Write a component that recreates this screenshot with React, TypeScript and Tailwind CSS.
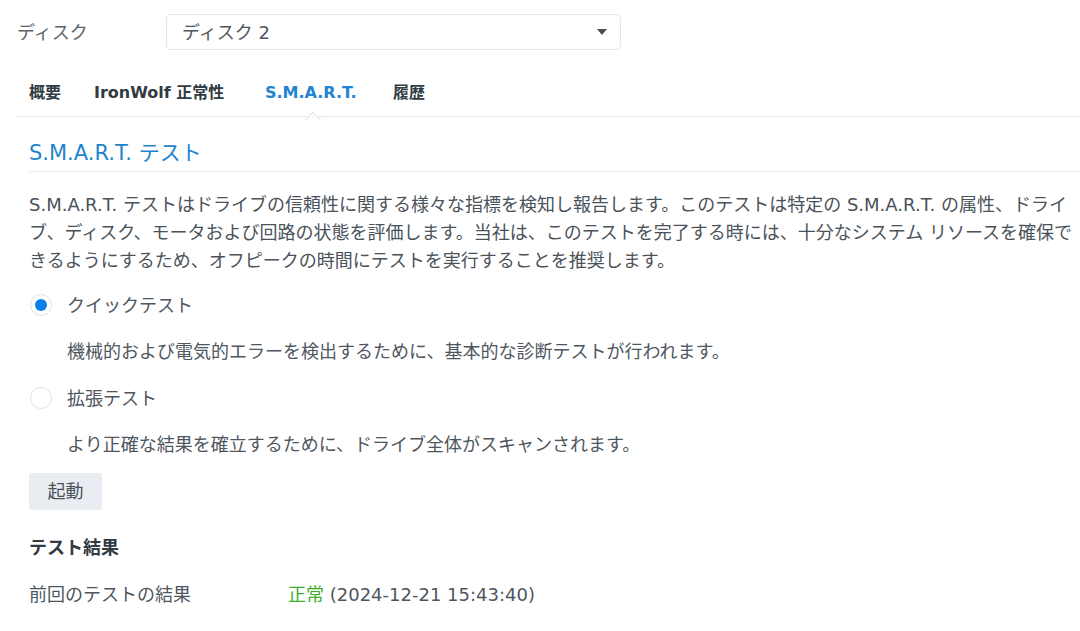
const font = { fontFamily: '"DejaVu Sans", "Noto Sans CJK JP", sans-serif' };

function Radio({ checked }: { checked?: boolean }) {
  return (
    <span className="flex h-[22px] w-[22px] items-center justify-center rounded-full border border-[#dfe3e8] bg-white">
      {checked && <span className="h-[12px] w-[12px] rounded-full bg-[#0a7fe6]" />}
    </span>
  );
}

const tabs = [
  { label: "概要", w: "w-[32px]" },
  { label: "IronWolf 正常性", w: "w-[138px]" },
  { label: "S.M.A.R.T.", w: "w-[95px]", active: true },
  { label: "履歴", w: "w-[33px]" },
];

export default function App() {
  return (
    <div className="h-[631px] w-[1080px] overflow-hidden bg-white text-[#4e5660]" style={font}>
      {/* disk picker */}
      <div className="flex items-center pl-[17px] pt-[14px]">
        <span className="w-[149px] text-[18px] text-[#5b636b]">ディスク</span>
        <div className="flex h-[36px] w-[455px] items-center justify-between rounded-[5px] border border-[#e2e5e9] pl-[15px] pr-[13px] text-[18px]">
          <span>ディスク 2</span>
          <svg width="10" height="6" viewBox="0 0 10 6">
            <path d="M0 0h10L5 6z" fill="#4a4f55" />
          </svg>
        </div>
      </div>

      {/* tab bar */}
      <div className="ml-[17px] mt-[20px] flex h-[47px] items-center gap-[33px] border-b border-[#e8ebee] pl-[12px] text-[16px] font-bold text-[#323a42]">
        {tabs.map((t) => (
          <div
            key={t.label}
            className={"relative whitespace-nowrap " + t.w + (t.active ? " text-[#1f84d1]" : "")}
          >
            {t.label}
            {t.active && (
              <span className="absolute left-1/2 top-[33px] h-[11px] w-[11px] -translate-x-1/2 rotate-45 border-l border-t border-[#e2e5e9] bg-white" />
            )}
          </div>
        ))}
      </div>

      <div className="pl-[29px]">
        <div className="mt-[22px] border-b border-dotted border-[#d9dde2] pb-[4px] text-[21px] leading-[28px] text-[#1d84cc]">
          S.M.A.R.T. テスト
        </div>
        <p className="mt-[19px] whitespace-nowrap text-[18px] leading-[28px] text-[#4a525a]">
          S.M.A.R.T. テストはドライブの信頼性に関する様々な指標を検知し報告します。このテストは特定の S.M.A.R.T. の属性、ドライ
          <br />
          ブ、ディスク、モータおよび回路の状態を評価します。当社は、このテストを完了する時には、十分なシステム リソースを確保で
          <br />
          きるようにするため、オフピークの時間にテストを実行することを推奨します。
        </p>

        <div className="ml-[1px] mt-[16px] flex h-[28px] items-center gap-[15px] text-[18px]">
          <Radio checked />
          <span>クイックテスト</span>
        </div>
        <div className="ml-[38px] mt-[19px] h-[28px] text-[18px] leading-[28px]">
          機械的および電気的エラーを検出するために、基本的な診断テストが行われます。
        </div>
        <div className="ml-[1px] mt-[18px] flex h-[28px] items-center gap-[15px] text-[18px]">
          <Radio />
          <span>拡張テスト</span>
        </div>
        <div className="ml-[38px] mt-[19px] h-[28px] text-[18px] leading-[28px]">
          より正確な結果を確立するために、ドライブ全体がスキャンされます。
        </div>

        <button className="mt-[14px] flex h-[37px] w-[73px] items-center justify-center rounded-[3px] bg-[#e9edf2] text-[18px] text-[#4a525a]">
          起動
        </button>

        <div className="mt-[24px] h-[28px] text-[18px] font-bold leading-[28px] text-[#323a42]">テスト結果</div>
        <div className="mt-[18px] flex h-[28px] items-center text-[18px]">
          <span className="w-[259px]">前回のテストの結果</span>
          <span>
            <span className="text-[#3fae2a]">正常</span> (2024-12-21 15:43:40)
          </span>
        </div>
      </div>
    </div>
  );
}
